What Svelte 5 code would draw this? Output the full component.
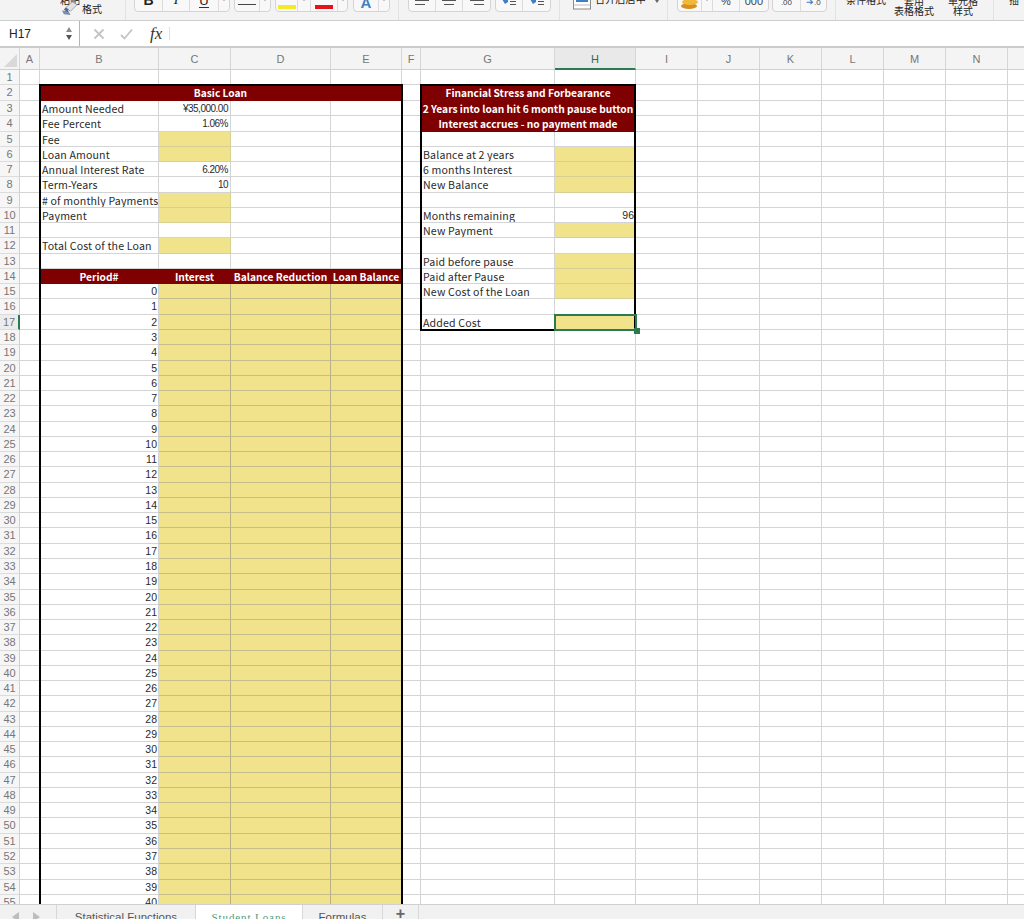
<script>
	const columns = ['A', 'B', 'C', 'D', 'E', 'F', 'G', 'H', 'I', 'J', 'K', 'L', 'M', 'N', ''];

	// sheet contents, keyed by column + row
	const labels = {
		B3: 'Amount Needed',
		B4: 'Fee Percent',
		B5: 'Fee',
		B6: 'Loan Amount',
		B7: 'Annual Interest Rate',
		B8: 'Term-Years',
		B9: '# of monthly Payments',
		B10: 'Payment',
		B12: 'Total Cost of the Loan',
		G6: 'Balance at 2 years',
		G7: '6 months Interest',
		G8: 'New Balance',
		G10: 'Months remaining',
		G11: 'New Payment',
		G13: 'Paid before pause',
		G14: 'Paid after Pause',
		G15: 'New Cost of the Loan',
		G17: 'Added Cost'
	};
	const numbers = { C3: '¥35,000.00', C4: '1.06%', C7: '6.20%', C8: '10', H10: '96' };
	const heads = {
		B2: ['Basic Loan', 4],
		G2: ['Financial Stress and Forbearance', 2],
		G3: ['2 Years into loan hit 6 month pause button', 2],
		G4: ['Interest accrues - no payment made', 2],
		B14: ['Period#', 1],
		C14: ['Interest', 1],
		D14: ['Balance Reduction', 1],
		E14: ['Loan Balance', 1]
	};
	const inputs = ['C5', 'C6', 'C9', 'C10', 'C12', 'H6', 'H7', 'H8', 'H11', 'H13', 'H14', 'H15', 'H17'];

	function buildRow(r) {
		const cells = [];
		let skip = 0;
		for (const col of columns) {
			if (skip > 0) {
				skip--;
				continue;
			}
			const key = col + r;
			if (heads[key]) {
				cells.push({ key, text: heads[key][0], cls: 'head span' + heads[key][1] });
				skip = heads[key][1] - 1;
			} else if (labels[key]) {
				cells.push({ key, text: labels[key], cls: '' });
			} else if (numbers[key]) {
				cells.push({ key, text: numbers[key], cls: col === 'C' ? 'num tight' : 'num' });
			} else if (inputs.includes(key)) {
				cells.push({ key, text: '', cls: 'input' });
			} else if (r >= 15 && col === 'B') {
				cells.push({ key, text: String(r - 15), cls: 'num' });
			} else if (r >= 15 && (col === 'C' || col === 'D' || col === 'E')) {
				cells.push({ key, text: '', cls: 'input dense' });
			} else {
				cells.push({ key, text: '', cls: '' });
			}
		}
		return cells;
	}

	const rows = Array.from({ length: 55 }, (_, i) => ({ n: i + 1, cells: buildRow(i + 1) }));
	const tabs = ['Statistical Functions', 'Student Loans', 'Formulas'];
</script>

<div class="app">
	<div class="ribbon">
		<div class="clipboard">
			<span class="paste">粘贴</span>
			<div class="painter">
				<svg width="17" height="15" viewBox="0 0 18 14">
					<path d="M0 9 L7 10 L9 14 L2 13 Z" fill="#7d8ea6" />
					<path d="M4 6 L9 10 L16 3 L11 0 Z" fill="#dfe3ea" stroke="#8a93a3" stroke-width="0.8" />
					<path d="M2 8 L6 11 L7 8 L4 6 Z" fill="#4d6a92" />
				</svg>
				<span>格式</span>
			</div>
		</div>
		<div class="sep first"></div>

		<div class="btns">
			<div class="btn w28"><b class="glyph">B</b></div>
			<div class="btn w27"><i class="glyph serif">I</i></div>
			<div class="btn w29"><span class="glyph under">U</span></div>
			<div class="btn w10"><span class="caret"></span></div>
		</div>
		<div class="btns gap4">
			<div class="btn w25"><span class="bar black"></span></div>
			<div class="btn w10"><span class="caret"></span></div>
		</div>
		<div class="btns gap4">
			<div class="btn w22"><span class="bar yellow"></span></div>
			<div class="btn w13"><span class="caret"></span></div>
			<div class="btn w27"><span class="bar red"></span></div>
			<div class="btn w9"><span class="caret"></span></div>
		</div>
		<div class="btns gap5">
			<div class="btn w25"><b class="glyph blue">A</b></div>
			<div class="btn w10"><span class="caret"></span></div>
		</div>
		<div class="sep"></div>

		<div class="btns gap9">
			{#each [0, 1, 2] as i (i)}
				<div class="btn w27">
					<svg width="18" height="8" viewBox="0 0 18 8">
						<path d="M2 1.5 H16" stroke="#555" />
						<path d="M{i * 2 + 2} 5.5 H{i * 2 + 12}" stroke="#555" />
					</svg>
				</div>
			{/each}
		</div>
		<div class="btns gap4">
			{#each [0, 1] as i (i)}
				<div class="btn w27">
					<svg width="18" height="8" viewBox="0 0 18 8">
						<path d="M2 0 L8 0 L8 3 L5 5 Z" fill="#3f7fc4" />
						<path d="M10 2.5 H16 M10 5.5 H16" stroke="#555" />
					</svg>
				</div>
			{/each}
		</div>
		<div class="sep"></div>

		<div class="merge">
			<svg width="18" height="11" viewBox="0 0 18 11">
				<rect x="0.5" y="-3" width="17" height="13" fill="#fff" stroke="#888" />
				<path d="M3 2 H15" stroke="#3f7fc4" stroke-width="2" />
				<path d="M0.5 6 H17.5" stroke="#bbb" />
			</svg>
			<span class="merge-text">合并后居中</span>
			<span class="caret"></span>
		</div>
		<div class="sep"></div>

		<div class="btns gap9">
			<div class="btn w24 coins">
				<svg width="19" height="10" viewBox="0 0 19 10">
					<ellipse cx="9" cy="7" rx="8" ry="3" fill="#d98f1f" />
					<ellipse cx="10" cy="3" rx="8" ry="3" fill="#efb93c" />
				</svg>
			</div>
			<div class="btn w11"><span class="caret"></span></div>
			<div class="btn w27"><span class="small">%</span></div>
			<div class="btn w28"><span class="small">000</span></div>
		</div>
		<div class="btns gap3">
			<div class="btn w28"><span class="tiny">.00</span></div>
			<div class="btn w25"><span class="tiny"><em>➔</em>.0</span></div>
		</div>
		<div class="sep"></div>

		<div class="style cond"><span>条件格式</span></div>
		<div class="style table"><span>套用</span><span>表格格式</span></div>
		<div class="style cell"><span>单元格</span><span>样式</span></div>
		<div class="sep last"></div>
		<div class="style insert"><span>插</span></div>
	</div>

	<div class="formula">
		<div class="namebox">
			<span>H17</span>
			<div class="spin"><i class="up"></i><i class="down"></i></div>
		</div>
		<svg class="mark cross" width="12" height="12" viewBox="0 0 12 12">
			<path d="M1.5 1.5 L10.5 10.5 M10.5 1.5 L1.5 10.5" stroke="#c4c4c4" stroke-width="1.8" />
		</svg>
		<svg class="mark check" width="13" height="12" viewBox="0 0 13 12">
			<path d="M1 7 L4.5 10.5 L12 1.5" fill="none" stroke="#c4c4c4" stroke-width="1.8" />
		</svg>
		<span class="fx">fx</span>
		<div class="fxline"></div>
	</div>

	<div class="sheet">
		<div class="corner"><span class="tri"></span></div>
		{#each columns as col, i (i)}
			<div class="colhead" class:active={col === 'H'}>{col}</div>
		{/each}
		{#each rows as row (row.n)}
			<div class="rowhead" class:active={row.n === 17}>{row.n}</div>
			{#each row.cells as cell (cell.key)}
				<div class="cell-box {cell.cls}">{cell.text}</div>
			{/each}
		{/each}
		<div class="box loan"></div>
		<div class="box stress"></div>
		<div class="selected"><span class="handle"></span></div>
	</div>

	<div class="tabbar">
		<div class="arrows">
			<span class="left"></span>
			<span class="right"></span>
		</div>
		{#each tabs as tab (tab)}
			<div class="tab" class:current={tab === 'Student Loans'}>{tab}</div>
		{/each}
		<div class="tab plus">+</div>
	</div>
</div>

<style>
	:global(body) {
		margin: 0;
		background: #fff;
	}

	.app {
		width: 1024px;
		height: 919px;
		overflow: hidden;
		display: flex;
		flex-direction: column;
		font-family: 'Noto Sans CJK SC', 'Noto Sans', sans-serif;
		color: #222;
	}

	/* ribbon, cut off at the top like the screenshot */
	.ribbon {
		height: 20px;
		flex: none;
		display: flex;
		align-items: flex-end;
		overflow: hidden;
		background: #f3f3f3;
		border-bottom: 1px solid #cfcfcf;
		font-size: 10px;
		line-height: 12px;
		white-space: nowrap;
	}

	.clipboard {
		margin-left: 60px;
		width: 65px;
		flex: none;
		padding-bottom: 4px;
		display: flex;
		flex-direction: column;
	}

	.paste {
		margin-bottom: -5px;
	}

	.painter {
		display: flex;
		align-items: center;
		gap: 3px;
		margin-left: 2px;
	}

	.sep {
		width: 1px;
		height: 20px;
		background: #e2e2e2;
		flex: none;
		margin-left: 8px;
	}

	.sep.first {
		margin-left: 0;
		margin-right: 8px;
	}

	.sep.last {
		margin-left: 15px;
	}

	.btns {
		display: flex;
		height: 26px;
		margin-bottom: 8px;
		border: 1px solid #d4d4d4;
		border-radius: 4px;
		background: #f8f8f8;
		flex: none;
	}

	.gap3 {
		margin-left: 3px;
	}

	.gap4 {
		margin-left: 4px;
	}

	.gap5 {
		margin-left: 5px;
	}

	.gap9 {
		margin-left: 9px;
	}

	.btn {
		display: flex;
		align-items: flex-end;
		justify-content: center;
		box-sizing: border-box;
		border-right: 1px solid #dcdcdc;
		padding-bottom: 4px;
	}

	.btn:last-child {
		border-right: none;
	}

	.btn.coins {
		padding-bottom: 2px;
	}

	.w9 { width: 9px; }
	.w10 { width: 10px; }
	.w11 { width: 11px; }
	.w13 { width: 13px; }
	.w22 { width: 22px; }
	.w24 { width: 24px; }
	.w25 { width: 25px; }
	.w27 { width: 27px; }
	.w28 { width: 28px; }
	.w29 { width: 29px; }

	.glyph {
		font-family: 'Liberation Sans', sans-serif;
		font-size: 14px;
		line-height: 14px;
	}

	.glyph.serif {
		font-family: 'Liberation Serif', serif;
	}

	.glyph.under {
		font-size: 13px;
		line-height: 13px;
		border-bottom: 1px solid #333;
		margin-bottom: -1px;
	}

	.glyph.blue {
		color: #3f7fc4;
		font-size: 15px;
		margin-bottom: -3px;
	}

	.caret {
		display: inline-block;
		width: 0;
		height: 0;
		border-left: 2.5px solid transparent;
		border-right: 2.5px solid transparent;
		border-top: 3px solid #666;
		margin-bottom: 6px;
	}

	.bar {
		display: block;
		width: 18px;
		height: 4px;
		margin-bottom: -2px;
	}

	.bar.black {
		height: 1px;
		background: #444;
		margin-bottom: 2px;
	}

	.bar.yellow {
		background: #f4ea2a;
	}

	.bar.red {
		background: #e5141a;
	}

	.merge {
		display: flex;
		flex: none;
		align-items: flex-end;
		gap: 4px;
		margin-left: 13px;
		padding-bottom: 10px;
		font-size: 10.2px;
		line-height: 12px;
	}

	.merge-text {
		margin-bottom: 5px;
	}

	.merge .caret {
		margin: 0 0 7px 5px;
	}

	.small {
		font-size: 11px;
		line-height: 11px;
		color: #444;
		font-family: 'Liberation Sans', sans-serif;
	}

	.tiny {
		font-size: 8px;
		line-height: 9px;
		font-family: 'Liberation Sans', sans-serif;
		color: #444;
	}

	.tiny em {
		font-style: normal;
		color: #3f7fc4;
		font-size: 9px;
	}

	.style {
		display: flex;
		flex-direction: column;
		align-items: center;
		font-size: 10px;
		line-height: 10px;
		flex: none;
	}

	.style.cond {
		margin-left: 10px;
		padding-bottom: 15px;
	}

	.style.table {
		margin-left: 8px;
		padding-bottom: 4px;
	}

	.style.cell {
		margin-left: 14px;
		padding-bottom: 4px;
	}

	.style.insert {
		margin-left: 15px;
		padding-bottom: 15px;
	}

	/* formula bar */
	.formula {
		height: 25px;
		flex: none;
		display: flex;
		align-items: center;
		background: #fff;
		border-bottom: 2px solid #cbcbcb;
	}

	.namebox {
		width: 80px;
		height: 100%;
		box-sizing: border-box;
		padding: 0 5px 0 9px;
		display: flex;
		align-items: center;
		justify-content: space-between;
		border-right: 1px solid #b5b5b5;
		font-family: 'Liberation Sans', sans-serif;
		font-size: 12px;
	}

	.spin {
		display: flex;
		flex-direction: column;
		gap: 3px;
		align-items: center;
		margin-right: 2px;
	}

	.spin i {
		width: 0;
		height: 0;
		border-left: 3.5px solid transparent;
		border-right: 3.5px solid transparent;
	}

	.spin .up {
		border-bottom: 5px solid #8b8b8b;
	}

	.spin .down {
		border-top: 5px solid #555;
	}

	.cross {
		margin-left: 13px;
	}

	.check {
		margin-left: 15px;
	}

	.fx {
		font-family: 'Liberation Serif', serif;
		font-style: italic;
		font-size: 17px;
		margin-left: 17px;
		color: #333;
	}

	.fxline {
		width: 1px;
		height: 13px;
		background: #e0e0e0;
		margin-left: 7px;
	}

	/* the worksheet */
	.sheet {
		flex: none;
		height: 856px;
		overflow: hidden;
		position: relative;
		display: grid;
		grid-template-columns: 20px 20px 119px 72px 100px 71px 19px 134px 81px 62px 62px 62px 62px 62px 62px 17px;
		grid-template-rows: 21.5px 15.5px 16px repeat(53, 15.275px);
		font-size: 11px;
		line-height: 15px;
		background: #fff;
	}

	.corner,
	.colhead {
		background: #f4f4f4;
		border-right: 1px solid #d6d6d6;
		border-bottom: 1px solid #cfcfcf;
		box-sizing: border-box;
	}

	.corner {
		display: flex;
		align-items: flex-end;
		justify-content: flex-end;
		padding: 0 2px 2px 0;
	}

	.tri {
		width: 0;
		height: 0;
		border-left: 13px solid transparent;
		border-bottom: 13px solid #d9d9d9;
	}

	.colhead {
		text-align: center;
		line-height: 22px;
		color: #777;
		font-family: 'Liberation Sans', sans-serif;
		font-size: 11px;
	}

	.colhead.active {
		background: #e9e9e9;
		color: #33694c;
		border-bottom: 2px solid #2c7a52;
	}

	.rowhead {
		background: #f6f6f6;
		border-right: 1px solid #cfcfcf;
		border-bottom: 1px solid #dcdcdc;
		box-sizing: border-box;
		text-align: center;
		color: #777;
		font-family: 'Liberation Sans', sans-serif;
		font-size: 11px;
	}

	.rowhead.active {
		background: #ececec;
		border-right: 2px solid #2c7a52;
	}

	.cell-box {
		box-sizing: border-box;
		border-right: 1px solid #d4d4d4;
		border-bottom: 1px solid #d4d4d4;
		padding: 0 2px;
		white-space: nowrap;
		overflow: hidden;
		font-size: 10.6px;
		letter-spacing: 0.15px;
		color: #2a2a2a;
	}

	.num {
		text-align: right;
		padding-right: 1px;
		font-family: 'Liberation Sans', sans-serif;
		font-size: 10.5px;
		letter-spacing: 0;
	}

	.num.tight {
		padding-right: 2px;
		font-size: 10px;
		letter-spacing: -0.5px;
	}

	.head {
		background: #7e0000;
		color: #fff;
		font-weight: 700;
		font-size: 10.2px;
		text-align: center;
		border-right-color: #7e0000;
		border-bottom-color: #7e0000;
		padding: 0;
		letter-spacing: 0;
	}

	.span2 {
		grid-column: span 2;
	}

	.span4 {
		grid-column: span 4;
	}

	.input {
		background: #f0e38c;
		border-color: #d8cf95;
	}

	.input.dense {
		border-right-color: #b9b183;
		border-bottom-color: #c6be8a;
	}

	/* thick outlines and the selection sit over the cells */
	.box {
		position: absolute;
		inset: -1px -0.5px -1px -1.5px;
		border: 2px solid #000;
		pointer-events: none;
	}

	.box.loan {
		grid-column: 3 / 7;
		grid-row: 3 / 57;
		bottom: -10px;
	}

	.box.stress {
		grid-column: 8 / 10;
		grid-row: 3 / 19;
		right: 0;
	}

	.selected {
		position: absolute;
		grid-column: 9 / 10;
		grid-row: 18 / 19;
		inset: -1px;
		border: 2px solid #2c7a52;
		pointer-events: none;
	}

	.handle {
		position: absolute;
		right: -5px;
		bottom: -5px;
		width: 6px;
		height: 6px;
		background: #2c7a52;
	}

	/* sheet tabs */
	.tabbar {
		flex: 1;
		min-height: 0;
		display: flex;
		overflow: hidden;
		background: #f1f1f1;
		border-top: 1px solid #d0d0d0;
		box-sizing: border-box;
		font-family: 'Liberation Sans', sans-serif;
		font-size: 11.5px;
		line-height: 14px;
		color: #555;
	}

	.arrows {
		width: 57px;
		border-right: 1px solid #d8d8d8;
		display: flex;
		align-items: flex-start;
		gap: 14px;
		padding: 7px 0 0 12px;
		box-sizing: border-box;
	}

	.arrows span {
		width: 0;
		height: 0;
		border-top: 5px solid transparent;
		border-bottom: 5px solid transparent;
	}

	.arrows .left {
		border-right: 7px solid #bdbdbd;
	}

	.arrows .right {
		border-left: 7px solid #bdbdbd;
	}

	.tab {
		padding-top: 5px;
		height: 22px;
		box-sizing: border-box;
		text-align: center;
		border-right: 1px solid #d8d8d8;
		white-space: nowrap;
		width: 139px;
	}

	.tab:nth-of-type(3) {
		background: #fff;
		width: 107px;
		margin-top: -1px;
		padding-top: 6px;
		font-family: 'Liberation Serif', serif;
		font-size: 11px;
		color: #4f9a78;
		letter-spacing: 0.9px;
	}

	.tab:nth-of-type(4) {
		width: 80px;
	}

	.tab.plus {
		width: 36px;
		padding-top: 2px;
		font-size: 16px;
		font-weight: 700;
		color: #666;
	}
</style>
